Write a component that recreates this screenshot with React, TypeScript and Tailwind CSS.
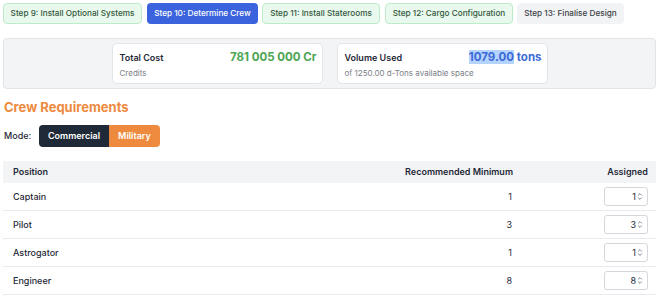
import React from "react";

const font = { fontFamily: "Inter, 'Noto Sans', sans-serif" };

function Spinner() {
  return (
    <svg width="6" height="9" viewBox="0 0 6 9" className="ml-[1px]">
      <path d="M1.2 3.4 L3 1.6 L4.8 3.4" fill="none" stroke="#6b7280" strokeWidth="0.9" />
      <path d="M1.2 5.6 L3 7.4 L4.8 5.6" fill="none" stroke="#6b7280" strokeWidth="0.9" />
    </svg>
  );
}

const rows = [
  { name: "Captain", min: 1, assigned: 1 },
  { name: "Pilot", min: 3, assigned: 3 },
  { name: "Astrogator", min: 1, assigned: 1 },
  { name: "Engineer", min: 8, assigned: 8 },
];

const green =
  "h-[21px] flex items-center justify-center whitespace-nowrap rounded-[4px] border border-[#bdeccb] bg-[#e9f9ed] text-[#33573e] text-[8.2px] font-medium";

export default function App() {
  return (
    <div className="w-[657px] h-[300px] overflow-hidden bg-white pl-[3px] pr-[1px] pt-[3px]" style={font}>
      <div className="flex items-center h-[21px]">
        <div className={`${green} w-[139px]`}>Step 9: Install Optional Systems</div>
        <div className="ml-[5px] h-[21px] w-[111px] flex items-center justify-center whitespace-nowrap rounded-[4px] bg-[#3b63dd] text-white text-[8.2px] font-medium">
          Step 10: Determine Crew
        </div>
        <div className={`${green} ml-[4px] w-[118px]`}>Step 11: Install Staterooms</div>
        <div className={`${green} ml-[5px] w-[128px]`}>Step 12: Cargo Configuration</div>
        <div className="ml-[4px] h-[21px] w-[107px] flex items-center justify-center whitespace-nowrap rounded-[4px] bg-[#f2f3f5] text-[#3b3f46] text-[8.2px] font-medium">
          Step 13: Finalise Design
        </div>
      </div>

      <div className="mt-[14px] h-[51px] rounded-[4px] border border-[#e2e4e8] bg-[#f3f4f6] flex justify-center items-start pt-[4px] gap-[14px]">
        <div className="w-[211px] h-[41px] rounded-[5px] border border-[#e3e5e9] bg-white pl-[7px] pr-[5px] pt-[7px]">
          <div className="flex items-center justify-between h-[14px]">
            <span className="text-[9px] font-semibold text-[#1f2937]">Total Cost</span>
            <span className="text-[11.5px] font-bold text-[#4ba553]">781 005 000 Cr</span>
          </div>
          <div className="text-[8px] leading-[12px] mt-[2px] text-[#7b8089]">Credits</div>
        </div>
        <div className="w-[211px] h-[41px] rounded-[5px] border border-[#e3e5e9] bg-white pl-[7px] pr-[5px] pt-[7px]">
          <div className="flex items-center justify-between h-[14px]">
            <span className="text-[9px] font-semibold text-[#1f2937]">Volume Used</span>
            <span className="text-[11.5px] font-bold text-[#3d6ad6]">
              <span className="bg-[#b4d4fd]">1079.00</span> tons
            </span>
          </div>
          <div className="text-[8px] leading-[12px] mt-[2px] text-[#7b8089]">of 1250.00 d-Tons available space</div>
        </div>
      </div>

      <h2 className="mt-[9px] ml-[1px] text-[13px] leading-[18px] font-bold text-[#ee8a3e]">Crew Requirements</h2>

      <div className="mt-[9px] flex items-center h-[22px]">
        <span className="ml-[1px] text-[9px] font-medium text-[#1f2937] w-[35px]">Mode:</span>
        <div className="flex h-[22px] rounded-[4px] overflow-hidden">
          <div className="w-[70px] flex items-center justify-center bg-[#1f2937] text-white text-[9px] font-semibold">
            Commercial
          </div>
          <div className="w-[51px] flex items-center justify-center bg-[#ee8a3e] text-white text-[9px] font-semibold">
            Military
          </div>
        </div>
      </div>

      <div className="mt-[14px]">
        <div className="grid grid-cols-[1fr_135px] h-[22px] items-center bg-[#f3f4f6] text-[9px] font-semibold text-[#1f2937]">
          <div className="flex justify-between pl-[10px] pr-[8px]">
            <span>Position</span>
            <span>Recommended Minimum</span>
          </div>
          <div className="text-right pr-[8px]">Assigned</div>
        </div>
        {rows.map((r) => (
          <div
            key={r.name}
            className="grid grid-cols-[1fr_135px] h-[28px] items-center border-b border-[#e9eaed] text-[9px] text-[#1f2937]"
          >
            <div className="flex justify-between pl-[10px] pr-[9px]">
              <span className="font-medium">{r.name}</span>
              <span>{r.min}</span>
            </div>
            <div className="flex justify-end pr-[8px]">
              <div className="w-[44px] h-[19px] rounded-[3px] border border-[#d4d7dc] bg-white flex items-center justify-end pr-[4px] text-[9px]">
                <span>{r.assigned}</span>
                <Spinner />
              </div>
            </div>
          </div>
        ))}
      </div>
    </div>
  );
}
